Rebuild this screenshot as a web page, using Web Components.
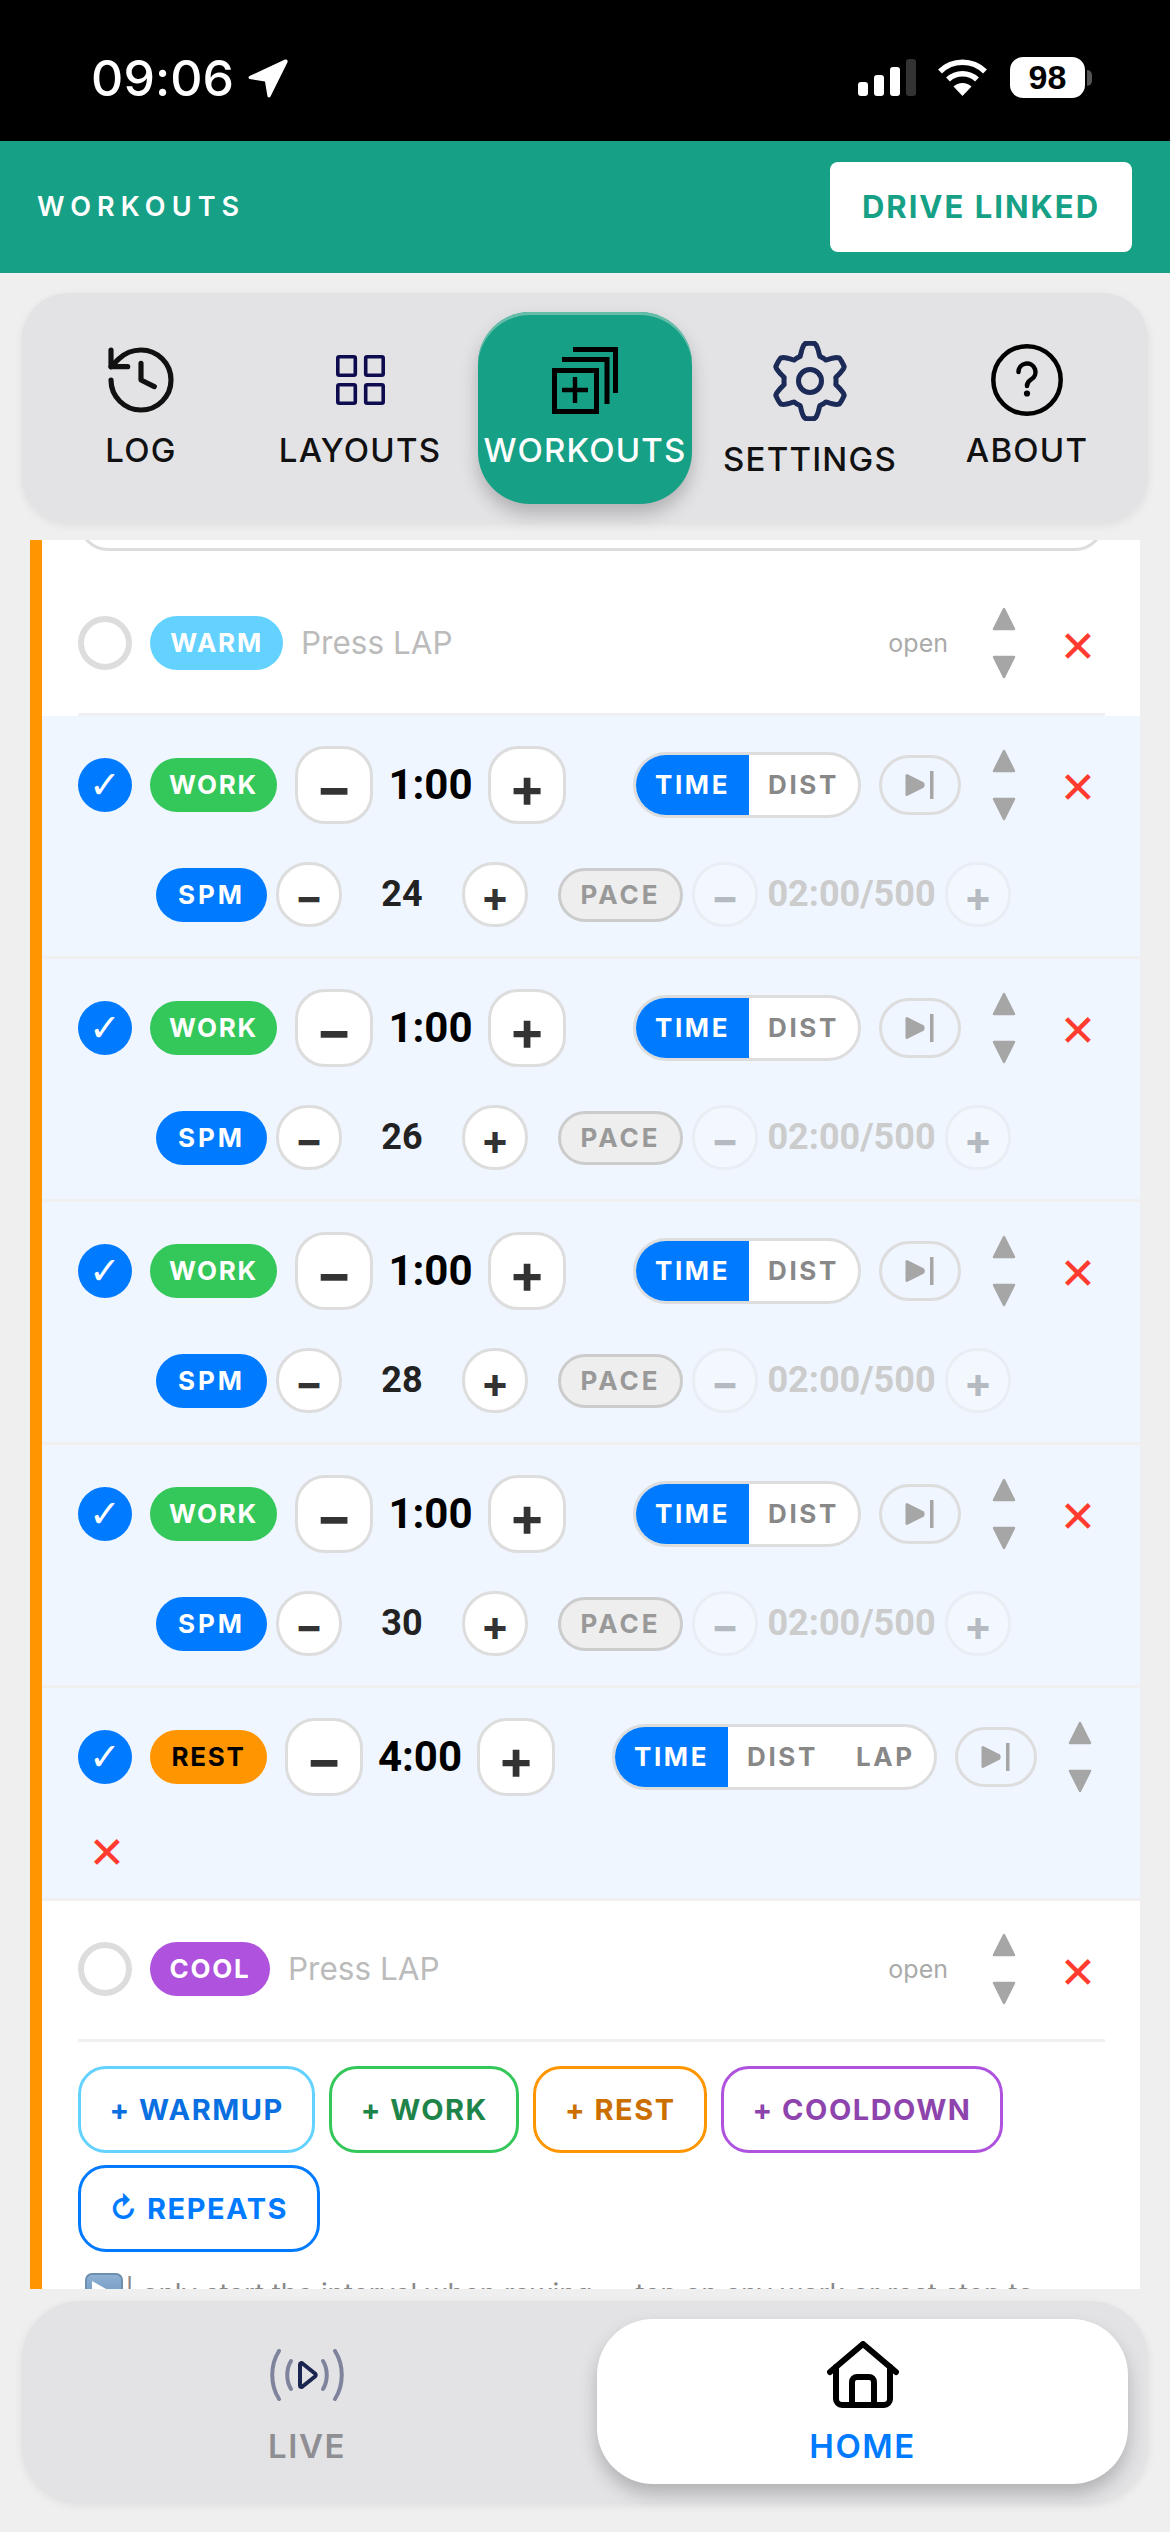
<!DOCTYPE html>
<html><head><meta charset="utf-8"><title>Workouts</title>
<style>
html,body{margin:0;padding:0;background:#efefef}
body{width:1170px;height:2532px;overflow:hidden;display:flex;flex-direction:column;font-family:Inter,"Noto Sans",sans-serif}
</style></head><body>
<status-bar></status-bar>
<app-header></app-header>
<nav-bar>
  <nav-item label="LOG" icon="log" w="202"></nav-item>
  <nav-item label="LAYOUTS" icon="layouts" w="236"></nav-item>
  <nav-item label="WORKOUTS" icon="workouts" w="214" active></nav-item>
  <nav-item label="SETTINGS" icon="gear" w="236" big></nav-item>
  <nav-item label="ABOUT" icon="about" w="198"></nav-item>
</nav-bar>
<workout-card>
  <open-step kind="warm" label="WARM"></open-step>
  <timed-step label="WORK" color="#34c759" time="1:00" spm="24"></timed-step>
  <timed-step label="WORK" color="#34c759" time="1:00" spm="26"></timed-step>
  <timed-step label="WORK" color="#34c759" time="1:00" spm="28"></timed-step>
  <timed-step label="WORK" color="#34c759" time="1:00" spm="30"></timed-step>
  <timed-step rest label="REST" color="#ff9500" time="4:00"></timed-step>
  <open-step kind="cool" label="COOL"></open-step>
  <add-row>
    <add-button bd="#64d2ff" fg="#0a6fe0">+ WARMUP</add-button>
    <add-button bd="#34c759" fg="#1e8449">+ WORK</add-button>
    <add-button bd="#ff9500" fg="#ca6f00">+ REST</add-button>
    <add-button bd="#af52de" fg="#8e44ad">+ COOLDOWN</add-button>
    <add-button bd="#007aff" fg="#007aff">↻ REPEATS</add-button>
  </add-row>
  <hint-note>| only start the interval when rowing — tap on any work or rest step to</hint-note>
</workout-card>
<bottom-tabs>
  <bottom-tab label="LIVE" icon="live"></bottom-tab>
  <bottom-tab label="HOME" icon="home" active></bottom-tab>
</bottom-tabs>

<script>
const ICONS={
 log:`<svg width="80" height="80" viewBox="0 0 24 24" fill="none" stroke="#111" stroke-width="1.55" stroke-linecap="round" stroke-linejoin="round"><path d="M3 12a9 9 0 1 0 9-9 9.75 9.75 0 0 0-6.74 2.74L3 8"/><path d="M3 3v5h5"/><path d="M12 7v5l4 2"/></svg>`,
 layouts:`<svg width="49" height="50" viewBox="0 0 49 50" fill="none" stroke="#0f0b4f" stroke-width="3.6"><rect x="1.8" y="1.8" width="17.5" height="18.5" rx="1.5"/><rect x="29.7" y="1.8" width="17.5" height="18.5" rx="1.5"/><rect x="1.8" y="29.7" width="17.5" height="18.5" rx="1.5"/><rect x="29.7" y="29.7" width="17.5" height="18.5" rx="1.5"/></svg>`,
 workouts:`<svg width="66" height="67" viewBox="0 0 66 67" fill="none" stroke="#000" stroke-width="5"><rect x="2.5" y="23.5" width="42" height="41"/><path d="M10 12.5H55V57"/><path d="M21 2.5H63.5V46"/><path d="M10 43H36M23 30V56" stroke-width="4.4"/></svg>`,
 about:`<svg width="72" height="72" viewBox="0 0 72 72" fill="none" stroke="#000" stroke-width="4.5" stroke-linecap="round"><circle cx="36" cy="36" r="33.7"/><path d="M27.5 28a8.5 8.5 0 1 1 12.7 7.4c-2.700 1.600-4.200 3-4.200 6.600"/><circle cx="36" cy="49.500" r="3.100" fill="#000" stroke="none"/></svg>`,
 live:`<svg width="74" height="52" viewBox="0 0 74 52" fill="none" stroke="#7f849c" stroke-width="4" stroke-linecap="round" stroke-linejoin="round"><path d="M9 2C0 16 0 36 9 50"/><path d="M65 2C74 16 74 36 65 50"/><path d="M21 12C16 20 16 32 21 40"/><path d="M53 12C58 20 58 32 53 40"/><path d="M30 15.500V36.500C30 38 31.500 38.500 32.500 37.500L45 27.500C46 26.500 46 25.500 45 24.500L32.500 14.500C31.500 13.500 30 14 30 15.500Z" stroke="#1a2550" stroke-width="4"/></svg>`,
 home:`<svg width="72" height="68" viewBox="0 0 72 68" fill="none" stroke="#000" stroke-width="6" stroke-linecap="round" stroke-linejoin="round"><path d="M3 31L36 3L69 31"/><path d="M9 26V58a6 6 0 0 0 6 6H57a6 6 0 0 0 6-6V26"/><path d="M25 64V41a5 5 0 0 1 5-5h12a5 5 0 0 1 5 5V64"/></svg>`
};
function gearPath(){
  let pts=[];
  for(let i=0;i<144;i++){
    const t=i/144*Math.PI*2, c=Math.cos(6*t-Math.PI*6/2);
    const r=31.5+5.5*Math.max(-1,Math.min(1,1.5*c));
    pts.push((38+r*Math.cos(t)).toFixed(1)+' '+(40-r*Math.sin(t)*1.02).toFixed(1));
  }
  return 'M'+pts.join('L')+'Z';
}
ICONS.gear=`<svg width="76" height="80" viewBox="0 0 76 80" fill="none" stroke="#1b2a56" stroke-width="5" stroke-linejoin="round"><path d="${gearPath()}"/><circle cx="38" cy="40" r="11.500"/></svg>`;

const ARROWS=`<svg width="24" height="72" viewBox="0 0 24 72" fill="#a6a6a6" stroke="#a6a6a6" stroke-width="2.500" stroke-linejoin="round"><path d="M12 2L22 22H2Z"/><path d="M2 50H22L12 70Z"/></svg>`;
const PLAY=`<svg width="29" height="28" viewBox="0 0 29 28" fill="#a6a6a6"><path d="M2 3L19 11.500Q20.500 14 19 16.500L2 25Q0.500 25 0.500 23.500V4.500Q0.500 3 2 3Z"/><rect x="25" y="0" width="3.500" height="28"/></svg>`;

function def(name,css,html){
  customElements.define(name,class extends HTMLElement{
    constructor(){super();this.attachShadow({mode:'open'});}
    connectedCallback(){
      const a=n=>this.getAttribute(n);
      this.shadowRoot.innerHTML=`<style>${css}</style>`+(typeof html==='function'?html(a,this):html);
    }
  });
}
const BASE=`:host,*{box-sizing:border-box}`;

def('status-bar',BASE+`
:host{display:flex;flex:none;height:141px;background:#000;color:#fff;padding:57px 0 0 91px;align-items:flex-start}
.t{font:500 50px/42px Inter,sans-serif;width:157px;letter-spacing:.1px}
.r{margin-left:auto;display:flex;align-items:flex-start}
.s{display:flex;align-items:flex-end;gap:6px;height:37px;margin:2px 21px 0 0}
.s i{display:block;width:10px;background:#fff;border-radius:3px}
.w{margin:2px 22px 0 0;display:block}
.b{width:75px;height:41px;background:#fff;border-radius:13px;color:#000;font:700 34px/41px "Liberation Sans",sans-serif;text-align:center}
.n{width:5px;height:16px;background:#555;border-radius:0 5px 5px 0;margin:13px 78px 0 2px}
`,`<div class="t">09:06</div>
<svg width="40" height="39" viewBox="0 0 40 39" style="margin-top:2px"><path d="M37 .6L1.500 17Q-.5 18.500 1.500 20L17 22.500L19.500 37.500Q21 39.500 22.500 37.500L39.600 3Q40 0 37 .6Z" fill="#fff"/></svg>
<div class="r"><div class="s"><i style="height:14px"></i><i style="height:21px"></i><i style="height:29px"></i><i style="height:37px;background:#333"></i></div>
<svg class="w" width="51" height="37" viewBox="0 0 51 37" fill="none" stroke="#fff" stroke-width="5.500"><path d="M3 12.500a32 32 0 0 1 45 0"/><path d="M11 20.500a21 21 0 0 1 29 0"/><path d="M16.500 27.500a13 13 0 0 1 18 0L25.500 37Z" fill="#fff" stroke="none"/></svg>
<div class="b">98</div><div class="n"></div></div>`);

def('app-header',BASE+`
:host{display:flex;flex:none;height:132px;background:#16a085;align-items:center;justify-content:space-between;padding:0 38px 0 37px}
.t{color:#fff;font:600 27px/32px Inter,sans-serif;letter-spacing:6.100px}
.b{width:302px;height:90px;background:#fff;border-radius:8px;color:#16a085;font:700 31px/90px Inter,sans-serif;letter-spacing:2px;text-align:center}
`,`<div class="t">WORKOUTS</div><div class="b">DRIVE LINKED</div>`);

def('nav-bar',BASE+`
:host{display:flex;flex:none;height:229px;margin:20px 22px 18px;padding:19px 0 0 18px;background:#e3e3e6;border-radius:46px;box-shadow:0 3px 10px rgba(0,0,0,.07)}
`,`<slot></slot>`);

def('nav-item',BASE+`
:host{display:flex;flex:none;flex-direction:column;align-items:center;height:192px;padding-top:37px;color:#111;border-radius:52px}
:host([big]){padding-top:29px}
:host([active]){background:#16a085;color:#fff;box-shadow:0 10px 18px rgba(0,0,0,.22),inset 0 3px 0 #66bda9}
.i{height:62px;display:flex;align-items:center;justify-content:center}
:host([big]) .i{height:80px}
.l{margin-top:19px;font:500 33px/40px Inter,sans-serif;letter-spacing:1.200px;white-space:nowrap}
:host([big]) .l{margin-top:18px}
`,(a,el)=>{el.style.width=a('w')+'px';return `<div class="i">${ICONS[a('icon')]}</div><div class="l">${a('label')}</div>`});

def('workout-card',BASE+`
:host{display:block;flex:none;height:1749px;margin:0 30px;background:#fff;border-left:12px solid #ff9500;overflow:hidden}
.field{height:60px;margin:-49px 35px 0 36px;border:3px solid #ddd;border-radius:30px;background:#fff}
`,`<div class="field"></div><slot></slot>`);

const PILL=`.pill{height:54px;border-radius:27px;display:flex;align-items:center;justify-content:center;font:700 26px/54px Inter,sans-serif;letter-spacing:1.700px;color:#fff;flex:none}
.pill.w{letter-spacing:3px}
.chk{flex:none;width:54px;height:54px;border-radius:50%;display:flex;align-items:center;justify-content:center}
.ord{flex:none;width:50px;height:72px;display:flex;align-items:center;justify-content:center}
.x{flex:none;width:58px;height:40px;color:#ff3b30;font:400 44px/40px "DejaVu Sans",sans-serif;text-align:center;position:relative;left:2px}
`;

def('open-step',BASE+PILL+`
:host{display:block;padding:33px 35px 0 36px;margin-top:0;background:#fff}
:host([kind=warm]){margin-top:24px}
.row{display:flex;align-items:center;column-gap:18px;height:70px}
.chk{border:6px solid #ddd}
.txt{font:400 31.500px/54px Inter,sans-serif;color:#bbb;flex:1}
.open{font:400 25px/54px Inter,sans-serif;color:#aaa;margin-right:13px}
.line{height:3px;margin:35px 0 0;background:#f0f0f0}
.x{top:4px}
`,(a)=>{const warm=a('kind')==='warm';return `<div class="row"><div class="chk"></div>
<div class="pill" style="width:${warm?133:120}px;background:${warm?'#64d2ff':'#af52de'}">${a('label')}</div>
<div class="txt">Press LAP</div><div class="open">open</div>
<div class="ord">${ARROWS}</div><div class="x">✕</div></div><div class="line"></div>`});

def('timed-step',BASE+PILL+`
:host{display:block;background:#eff6ff;padding:30px 30px 28px 36px;border-bottom:3px solid #f0f0f0;height:243px}
:host([rest]){height:213px;padding-bottom:0}
:host([rest]) .x{left:0}
.row{display:flex;flex-wrap:wrap;align-items:center;column-gap:18px;row-gap:34px}
.chk{background:#007aff;color:#fff;font:700 38px/54px "DejaVu Sans",sans-serif}
.st{display:flex;align-items:center;flex:none}
.btn{flex:none;background:#fff;border:3px solid #ddd;display:flex;align-items:center;justify-content:center;color:#333;font-family:Inter,sans-serif;font-weight:700}
.big{width:78px;height:78px;border-radius:30px;font-size:54px;line-height:78px;padding-top:6px}
.small{width:66px;height:65px;border-radius:32px;font-size:42px;line-height:65px;padding-top:4px}
.tv{font:700 42px/78px Roboto,sans-serif;color:#000;text-align:center;flex:none}
.tg{flex:none;display:flex;height:66px;border:3px solid #ddd;border-radius:33px;overflow:hidden;background:#fff}
.tg span{font:700 26px/60px Inter,sans-serif;letter-spacing:2.600px;color:#888;padding:0 19px}
.tg .on{background:#007aff;color:#fff}
.play{flex:none;width:82px;height:60px;border:3px solid #ddd;border-radius:30px;display:flex;align-items:center;justify-content:center}
.sub{display:flex;align-items:center;margin:36px 0 0 78px;column-gap:9px}
.sub .pill{height:54px}
.val{font:700 36px/69px Roboto,sans-serif;color:#222;text-align:center;flex:none}
.pace{width:125px;background:#eee;border:3px solid #ccc;color:#999;margin-left:21px}
.dis{opacity:.3}
.gr{color:#ccc}
.x{top:3px}
`,(a,el)=>{const rest=el.hasAttribute('rest');
return `<div class="row"><div class="chk">✓</div>
<div class="pill" style="width:${rest?117:127}px;background:${a('color')};${rest?'color:#000;margin-right:-2px;':''}">${a('label')}</div>
<div class="st" style="${rest?'margin-left:2px':''}"><div class="btn big">−</div><div class="tv" style="width:${rest?114:115}px">${a('time')}</div><div class="btn big">+</div></div>
<div class="tg" style="margin-left:${rest?39:49}px"><span class="on">TIME</span><span>DIST</span>${rest?'<span>LAP</span>':''}</div>
<div class="play">${PLAY}</div><div class="ord">${ARROWS}</div><div class="x">✕</div></div>
${rest?'':`<div class="sub"><div class="pill w" style="width:111px;background:#007aff">SPM</div><div class="btn small">−</div><div class="val" style="width:120px;margin:0 -9px">${a('spm')}</div><div class="btn small">+</div>
<div class="pill w pace">PACE</div><div class="btn small dis">−</div><div class="val gr" style="width:187px;margin:0 -9px">02:00/500</div><div class="btn small dis">+</div></div>`}`});

def('add-row',BASE+`
:host{display:flex;flex-wrap:wrap;gap:12px 14px;padding:24px 36px 0}
`,`<slot></slot>`);
def('add-button',BASE+`
:host{display:block;flex:none;height:87px;padding:0 28.500px;border:3px solid;border-radius:28px;font:700 29px/81px Inter,"DejaVu Sans",sans-serif;letter-spacing:1.500px;background:#fff;white-space:nowrap}
`,(a,el)=>{el.style.borderColor=a('bd');el.style.color=a('fg');return `<slot></slot>`});

def('hint-note',BASE+`
:host{display:flex;align-items:flex-start;padding:21px 0 0 43px;color:#888;font:400 27.600px/32px Inter,sans-serif;white-space:nowrap}
svg{flex:none;margin-right:2px}
span{padding-top:4px;display:block}
`,`<svg width="38" height="38" viewBox="0 0 38 38"><defs><linearGradient id="g" x1="0" y1="0" x2="0" y2="1"><stop offset="0" stop-color="#8fb2d3"/><stop offset="1" stop-color="#5f8bb8"/></linearGradient></defs><rect x="1" y="1" width="36" height="36" rx="6" fill="url(#g)" stroke="#6d8fb0" stroke-width="2"/><path d="M7 8L30 21L7 33Z" fill="#fff"/></svg><span><slot></slot></span>`);

def('bottom-tabs',BASE+`
:host{display:flex;flex:none;height:201px;margin:12px 22px 30px;padding:18px 0 0;column-gap:5px;background:#e3e3e6;border-radius:58px;box-shadow:0 3px 10px rgba(0,0,0,.08)}
`,`<slot></slot>`);
def('bottom-tab',BASE+`
:host{display:flex;flex:none;flex-direction:column;align-items:center;width:570px;height:165px;padding-top:22px;color:#8e8e93}
:host([active]){width:531px;background:#fff;color:#007aff;border-radius:56px;box-shadow:0 10px 18px rgba(0,0,0,.22)}
.i{height:68px;display:flex;align-items:center;justify-content:center}
.l{margin-top:17px;font:600 33px/40px Inter,sans-serif;letter-spacing:1.500px}
`,(a)=>`<div class="i">${ICONS[a('icon')]}</div><div class="l">${a('label')}</div>`);
</script>
</body></html>
